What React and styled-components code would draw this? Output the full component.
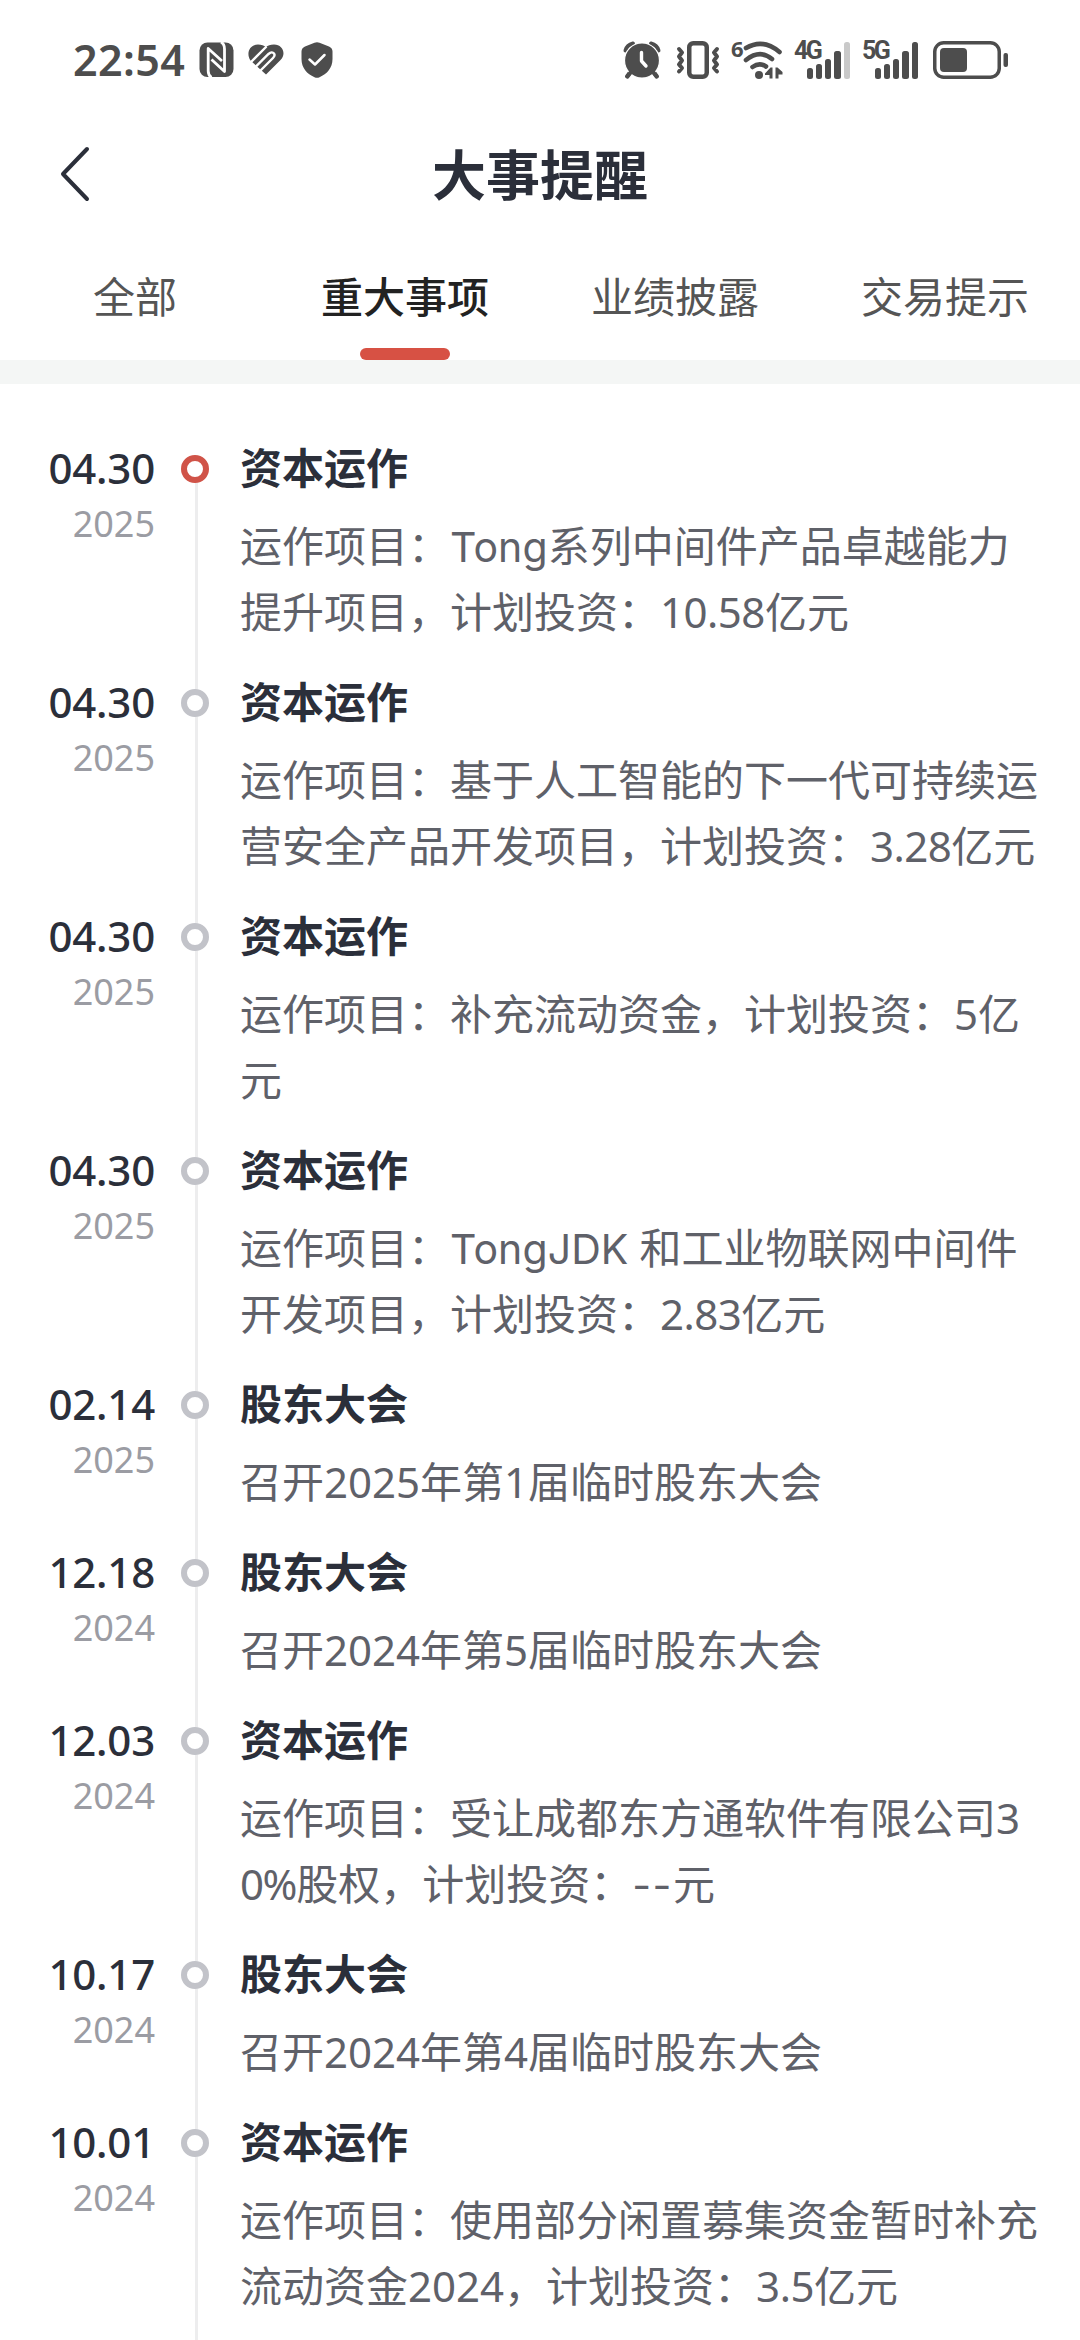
import styled, { createGlobalStyle } from "styled-components";

const App = () => {
  return (
    <Screen>
      <GlobalStyle />
      <StatusBar />
      <Header>
        <BackButton aria-label="返回">
          <svg width="32" height="56" viewBox="0 0 32 56" fill="none">
            <path
              d="M28 3L4 28L28 53"
              stroke="#2b2f3a"
              strokeWidth="4"
              strokeLinecap="round"
              strokeLinejoin="round"
            />
          </svg>
        </BackButton>
        <PageTitle>大事提醒</PageTitle>
      </Header>
      <Tabs>
        {tabs.map((tab) => (
          <Tab key={tab} $active={tab === "重大事项"}>
            {tab}
          </Tab>
        ))}
      </Tabs>
      <Timeline>
        {events.map((event, index) => (
          <Event key={index}>
            <DateColumn>
              <Day>{event.day}</Day>
              <Year>{event.year}</Year>
            </DateColumn>
            <Rail>
              <Dot $latest={index === 0} />
              <Line />
            </Rail>
            <Content>
              <EventTitle>{event.title}</EventTitle>
              {event.lines.map((line) => (
                <EventText key={line}>{splitRuns(line)}</EventText>
              ))}
            </Content>
          </Event>
        ))}
      </Timeline>
    </Screen>
  );
};

export default App;

// Latin words, amounts and percentages are spaced differently from the Chinese text
const splitRuns = (line) =>
  line.split(/([A-Za-z]+|-+|\d+\.\d+|\d+%)/).map((part, index) => {
    if (/^[A-Za-z]/.test(part)) return <Word key={index}>{part}</Word>;
    if (/^-/.test(part)) return <Word key={index} $spacing={1.6}>{part}</Word>;
    if (/%/.test(part)) return <Amount key={index} $spacing={-1.4}>{part}</Amount>;
    if (/\./.test(part)) return <Amount key={index}>{part}</Amount>;
    return part;
  });

const StatusBar = () => (
  <StatusRow>
    <Clock>22:54</Clock>
    <NfcIcon />
    <HealthIcon />
    <ShieldIcon />
    <Spacer />
    <AlarmIcon />
    <VibrateIcon />
    <WifiIcon />
    <Signal label="4G" level={4} />
    <Signal label="5G" level={5} />
    <BatteryIcon />
  </StatusRow>
);

const NfcIcon = () => (
  <Icon width="35" height="36" viewBox="0 0 35 36" $left={14}>
    <rect x=".5" y=".5" width="34" height="34.5" rx="8" fill="#4d4d4d" />
    <path
      d="M12.500 35.500Q9.200 33.500 9.200 29V6.500L23 19M22 0Q25.500 2 25.500 7V29.500L12.500 17.500"
      fill="none"
      stroke="#fff"
      strokeWidth="2.800"
      strokeLinejoin="round"
    />
  </Icon>
);

const HealthIcon = () => (
  <Icon width="36" height="31" viewBox="0 0 36 31" $left={14}>
    <path
      d="M2.500 16.500C-2 10 1 .5 10 .5C13.500 .5 16 1.500 18 3C20 1.500 22 .5 26 .5C35 .5 38.500 10 32.500 16L18 30.500Z"
      fill="#4d4d4d"
    />
    <path
      d="M2 19L18.500 2.500M6.500 24L20.500 10Q24 7 26 9.500Q27.500 11.500 25 14L11 28"
      fill="none"
      stroke="#fff"
      strokeWidth="2.400"
    />
  </Icon>
);

const ShieldIcon = () => (
  <Icon width="32" height="36" viewBox="0 0 32 36" $left={17}>
    <path
      d="M13.500 .8Q16 -.4 18.500 .8L28 4.500Q31.500 6 31.500 9.500V17C31.500 26 26 32 18.500 35.200Q16 36.400 13.500 35.200C6 32 .5 26 .5 17V9.500Q.5 6 4 4.500Z"
      fill="#4d4d4d"
    />
    <path
      d="M8.500 17.500L14 22.500L23.500 13"
      fill="none"
      stroke="#fff"
      strokeWidth="2.500"
      strokeLinecap="round"
      strokeLinejoin="round"
    />
  </Icon>
);

const AlarmIcon = () => (
  <Icon width="38" height="38" viewBox="0 0 38 38">
    <path
      d="M2.500 9.500Q4 4 10 2.500M35.500 9.500Q34 4 28 2.500M8 30L4 35.500M30 30L34 35.500"
      fill="none"
      stroke="#4d4d4d"
      strokeWidth="4"
      strokeLinecap="round"
    />
    <circle cx="19" cy="19.5" r="17.5" fill="#4d4d4d" stroke="#fff" strokeWidth="1.2" />
    <path
      d="M8 31L4.500 35.500M30 31L33.500 35.500"
      stroke="#4d4d4d"
      strokeWidth="4"
      strokeLinecap="round"
    />
    <path
      d="M18.500 11.500V20L23 25"
      fill="none"
      stroke="#fff"
      strokeWidth="3.400"
      strokeLinecap="round"
      strokeLinejoin="round"
    />
  </Icon>
);

const VibrateIcon = () => (
  <Icon width="42" height="38" viewBox="1 0 42 38" $left={16}>
    <rect
      x="13.250"
      y="2.250"
      width="17.500"
      height="33.500"
      rx="4"
      fill="none"
      stroke="#4d4d4d"
      strokeWidth="4.500"
    />
    <path
      d="M3 8L6 11.500L3 15.500L6 19.500L3 23.500L6 27L3 30.500M41 8L38 11.500L41 15.500L38 19.500L41 23.500L38 27L41 30.500"
      fill="none"
      stroke="#4d4d4d"
      strokeWidth="4"
      strokeLinecap="round"
      strokeLinejoin="round"
    />
  </Icon>
);

const WifiIcon = () => (
  <Icon width="50" height="40" viewBox="0 0 50 40" $left={13}>
    <text x="-1" y="16.500" fontSize="22" fontWeight="700" fill="#4d4d4d">
      6
    </text>
    <path
      d="M14 8Q31 -2 47.500 12M14 20Q28 9 40 19M20.500 27Q27.500 22 34 26.500"
      fill="none"
      stroke="#4d4d4d"
      strokeWidth="4.600"
      strokeLinecap="round"
    />
    <circle cx="27" cy="35" r="4" fill="#4d4d4d" />
    <path
      d="M33 33.500L38.500 27.500H40.500V38.500H37.500V35H33ZM43.500 27.500H45.500L50.500 32V34.500H46.500V38.500H43.500Z"
      fill="#4d4d4d"
    />
  </Icon>
);

const Signal = ({ label, level }) => (
  <SignalBox>
    <NetworkLabel>{label}</NetworkLabel>
    <Bars>
      {[11, 15, 20, 28, 37].map((height, index) => (
        <Bar key={height} $height={height} $on={index < level} />
      ))}
    </Bars>
  </SignalBox>
);

const BatteryIcon = () => (
  <Icon width="76" height="38" viewBox="0 0 76 38" $left={15}>
    <rect
      x="1.750"
      y="1.750"
      width="64.500"
      height="34.500"
      rx="9"
      fill="none"
      stroke="#4d4d4d"
      strokeWidth="3.500"
    />
    <rect x="7" y="7" width="27" height="24" rx="4" fill="#4d4d4d" />
    <rect x="70.500" y="12" width="4.500" height="14" rx="2" fill="#4d4d4d" />
  </Icon>
);

const GlobalStyle = createGlobalStyle`
  * {
    box-sizing: border-box;
  }

  body {
    margin: 0;
    background: #fff;
    font-family: "Noto Sans", "Noto Sans CJK SC", sans-serif;
  }
`;

// Styled Components
const Screen = styled.div`
  width: 1080px;
  height: 2340px;
  overflow: hidden;
  background: #fff;
`;

const StatusRow = styled.div`
  display: flex;
  align-items: center;
  height: 119px;
  padding: 0 71px 0 73px;
  color: #4d4d4d;
`;

const Clock = styled.span`
  width: 112px;
  font-size: 43px;
  font-weight: 600;
  line-height: 60px;
  letter-spacing: 0.4px;
`;

const Icon = styled.svg`
  flex: none;
  overflow: visible;
  margin-left: ${(props) => props.$left || 0}px;
`;

const Spacer = styled.div`
  flex: 1;
`;

const SignalBox = styled.div`
  display: grid;
  grid-template-columns: 56px;
  height: 38px;
  margin-left: 12px;

  & > * {
    grid-area: 1 / 1;
  }
`;

const NetworkLabel = styled.span`
  font-family: "Roboto", sans-serif;
  font-size: 25px;
  font-weight: 700;
  line-height: 19px;
  letter-spacing: -2.5px;
`;

const Bars = styled.div`
  display: flex;
  align-items: flex-end;
  justify-content: flex-end;
  gap: 3px;
`;

const Bar = styled.div`
  width: 6.3px;
  height: ${(props) => props.$height}px;
  border-radius: 2.5px;
  background: ${(props) => (props.$on ? "#4d4d4d" : "#c9c9c9")};
`;

const Header = styled.header`
  display: grid;
  grid-template-columns: 150px 1fr 150px;
  align-items: center;
  height: 112px;
`;

const BackButton = styled.button`
  display: flex;
  border: 0;
  padding: 0 0 2px 59px;
  background: none;
`;

const PageTitle = styled.h1`
  margin: 0;
  text-align: center;
  font-size: 54px;
  font-weight: 700;
  line-height: 80px;
  color: #2b2f3a;
`;

const Tabs = styled.nav`
  display: grid;
  grid-template-columns: repeat(4, 270px);
  height: 153px;
  border-bottom: 24px solid #f4f6f5;
`;

const Tab = styled.div`
  display: flex;
  flex-direction: column;
  align-items: center;
  justify-content: space-between;
  padding-top: 35px;
  font-size: 42px;
  line-height: 62px;
  font-weight: ${(props) => (props.$active ? 500 : 400)};
  color: ${(props) => (props.$active ? "#222" : "#555")};

  &::after {
    content: "";
    width: 90px;
    height: 12px;
    border-radius: 6px;
    background: ${(props) => (props.$active ? "#d75144" : "transparent")};
  }
`;

const Timeline = styled.main`
  padding-top: 51px;
`;

const Event = styled.article`
  display: grid;
  grid-template-columns: 155px 80px 1fr;
`;

const DateColumn = styled.div`
  text-align: right;
`;

const Day = styled.div`
  font-size: 42px;
  font-weight: 500;
  line-height: 66px;
  letter-spacing: -0.2px;
  color: #2b2f3a;
`;

const Year = styled.div`
  font-size: 36px;
  line-height: 46px;
  color: #9b9ca3;
`;

const Rail = styled.div`
  display: flex;
  flex-direction: column;
  align-items: center;
  padding-top: 20px;
`;

const Dot = styled.div`
  width: 28px;
  height: 28px;
  border: 6px solid ${(props) => (props.$latest ? "#d05348" : "#c2c3c9")};
  border-radius: 50%;
`;

const Line = styled.div`
  flex: 1;
  width: 3px;
  margin: 0 0 -20px 3px;
  background: #ededee;
`;

const Content = styled.div`
  padding: 0 0 24px 5px;
  white-space: nowrap;
`;

const EventTitle = styled.h2`
  margin: 0 0 12px;
  font-size: 42px;
  font-weight: 700;
  line-height: 66px;
  color: #2b2f3a;
`;

const EventText = styled.p`
  margin: 0;
  height: 66px;
  font-size: 42px;
  line-height: 66px;
  color: #5f6169;
`;

const Word = styled.span`
  font-family: "Inter", sans-serif;
  font-size: 41px;
  letter-spacing: ${(props) => props.$spacing ?? 0.1}px;
`;

const Amount = styled.span`
  letter-spacing: ${(props) => props.$spacing ?? -0.5}px;
`;

const tabs = ["全部", "重大事项", "业绩披露", "交易提示"];

const events = [
  {
    day: "04.30",
    year: "2025",
    title: "资本运作",
    lines: ["运作项目：Tong系列中间件产品卓越能力", "提升项目，计划投资：10.58亿元"],
  },
  {
    day: "04.30",
    year: "2025",
    title: "资本运作",
    lines: ["运作项目：基于人工智能的下一代可持续运", "营安全产品开发项目，计划投资：3.28亿元"],
  },
  {
    day: "04.30",
    year: "2025",
    title: "资本运作",
    lines: ["运作项目：补充流动资金，计划投资：5亿", "元"],
  },
  {
    day: "04.30",
    year: "2025",
    title: "资本运作",
    lines: ["运作项目：TongJDK 和工业物联网中间件", "开发项目，计划投资：2.83亿元"],
  },
  {
    day: "02.14",
    year: "2025",
    title: "股东大会",
    lines: ["召开2025年第1届临时股东大会"],
  },
  {
    day: "12.18",
    year: "2024",
    title: "股东大会",
    lines: ["召开2024年第5届临时股东大会"],
  },
  {
    day: "12.03",
    year: "2024",
    title: "资本运作",
    lines: ["运作项目：受让成都东方通软件有限公司3", "0%股权，计划投资：--元"],
  },
  {
    day: "10.17",
    year: "2024",
    title: "股东大会",
    lines: ["召开2024年第4届临时股东大会"],
  },
  {
    day: "10.01",
    year: "2024",
    title: "资本运作",
    lines: ["运作项目：使用部分闲置募集资金暂时补充", "流动资金2024，计划投资：3.5亿元"],
  },
];
